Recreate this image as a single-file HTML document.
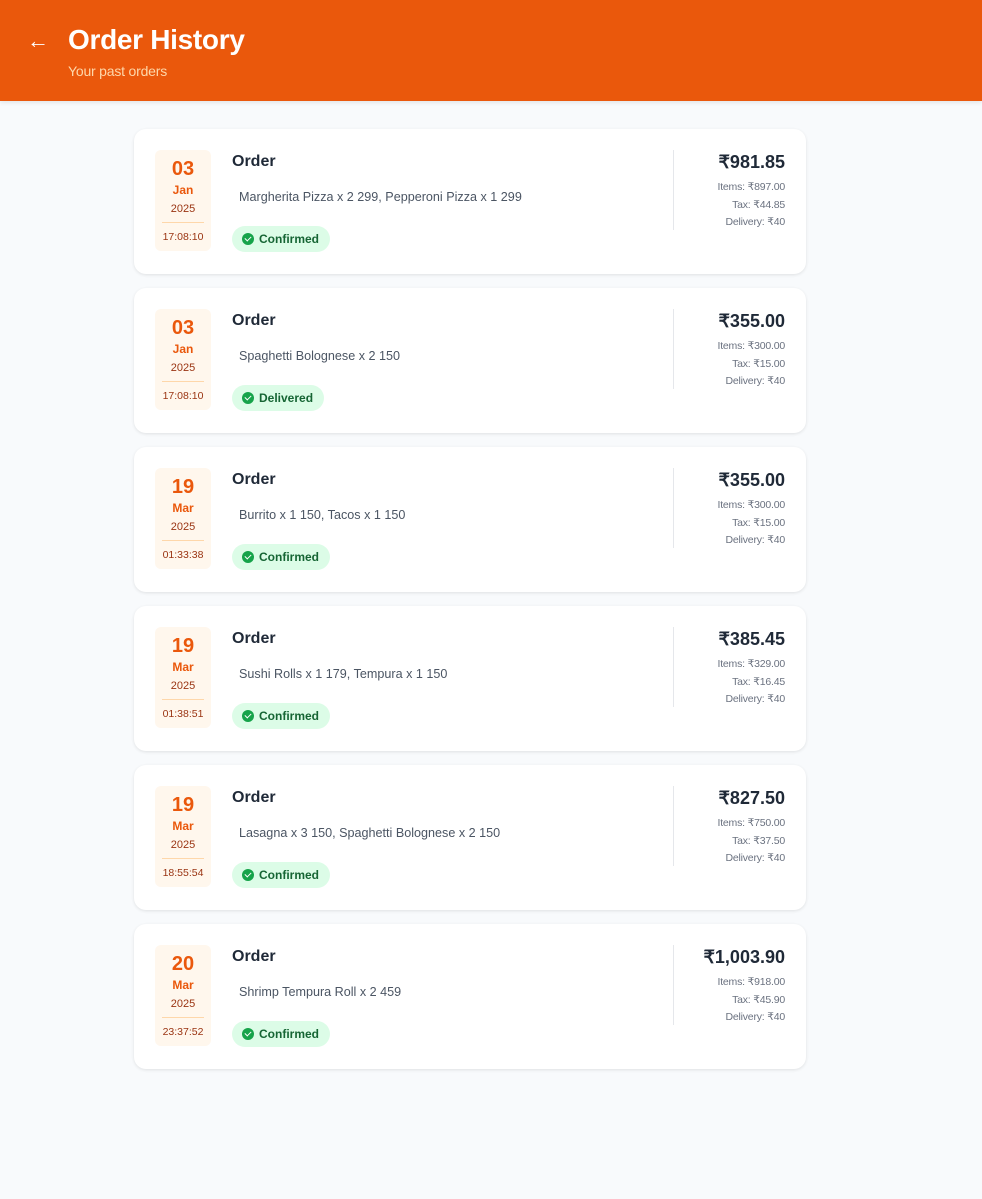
<!DOCTYPE html>
<html><head><meta charset="utf-8"><style>
*{box-sizing:border-box;margin:0;padding:0}
body{width:982px;height:1199px;background:#f8fafc;font-family:"Liberation Sans",sans-serif;overflow:hidden}
.hdr{height:101px;background:#ea580c;position:relative;box-shadow:0 2px 4px rgba(0,0,0,.08)}
.arrow{position:absolute;left:27px;top:28px;color:#fff;font-size:22px}
.hdr h1{position:absolute;left:68px;top:24px;color:#fff;font-size:28px;font-weight:bold;letter-spacing:-0.3px}
.hdr p{position:absolute;left:68px;top:63px;color:#fed7aa;font-size:14px;letter-spacing:-0.2px}
.card{position:absolute;left:134px;width:672px;height:145px;background:#fff;border-radius:12px;box-shadow:0 1px 3px rgba(0,0,0,.1)}
.date{position:absolute;left:21px;top:21px;width:56px;height:101px;background:#fff7ed;border-radius:6px;text-align:center}
.d{color:#ea580c;font-weight:bold;font-size:20px;margin-top:7px;line-height:24px}
.m{color:#ea580c;font-weight:bold;font-size:12px;line-height:16px;margin-top:1px}
.y{color:#9a3412;font-size:11px;line-height:14px;margin-top:4px}
.hr{width:42px;height:1px;background:#fed7aa;margin:6px auto 0}
.t{color:#9a3412;font-size:10.5px;line-height:14px;margin-top:7px}
.title{position:absolute;left:98px;top:24px;font-size:16px;font-weight:bold;color:#1f2937}
.items{position:absolute;left:105px;top:61px;font-size:12.6px;color:#4b5563}
.badge{position:absolute;left:98px;top:97px;height:26px;border-radius:13px;background:#dcfce7;color:#166534;font-size:12px;font-weight:bold;padding:0 11px 0 10px;display:flex;align-items:center;gap:5px}
.ck{width:12px;height:12px;border-radius:50%;background:#16a34a;display:inline-block;position:relative}
.ck:after{content:"";position:absolute;left:4px;top:2px;width:3px;height:5px;border:solid #fff;border-width:0 1.5px 1.5px 0;transform:rotate(45deg)}
.vl{position:absolute;left:539px;top:21px;width:1px;height:80px;background:#e5e7eb}
.pr{position:absolute;right:21px;top:22px;text-align:right}
.tot{font-size:18px;font-weight:bold;color:#1f2937;line-height:22px}
.sub{font-size:10.5px;color:#6b7280;line-height:17.5px;letter-spacing:-0.2px}
.sub:nth-child(2){margin-top:6px}
</style></head><body>
<div class="hdr"><span class="arrow">←</span><h1>Order History</h1><p>Your past orders</p></div>

<div class="card" style="top:129px"><div class="date"><div class="d">03</div><div class="m">Jan</div><div class="y">2025</div><div class="hr"></div><div class="t">17:08:10</div></div>
<div class="title">Order</div><div class="items">Margherita Pizza x 2 299, Pepperoni Pizza x 1 299</div>
<div class="badge"><span class="ck"></span>Confirmed</div><div class="vl"></div>
<div class="pr"><div class="tot">₹981.85</div><div class="sub">Items: ₹897.00</div><div class="sub">Tax: ₹44.85</div><div class="sub">Delivery: ₹40</div></div></div>

<div class="card" style="top:288px"><div class="date"><div class="d">03</div><div class="m">Jan</div><div class="y">2025</div><div class="hr"></div><div class="t">17:08:10</div></div>
<div class="title">Order</div><div class="items">Spaghetti Bolognese x 2 150</div>
<div class="badge"><span class="ck"></span>Delivered</div><div class="vl"></div>
<div class="pr"><div class="tot">₹355.00</div><div class="sub">Items: ₹300.00</div><div class="sub">Tax: ₹15.00</div><div class="sub">Delivery: ₹40</div></div></div>

<div class="card" style="top:447px"><div class="date"><div class="d">19</div><div class="m">Mar</div><div class="y">2025</div><div class="hr"></div><div class="t">01:33:38</div></div>
<div class="title">Order</div><div class="items">Burrito x 1 150, Tacos x 1 150</div>
<div class="badge"><span class="ck"></span>Confirmed</div><div class="vl"></div>
<div class="pr"><div class="tot">₹355.00</div><div class="sub">Items: ₹300.00</div><div class="sub">Tax: ₹15.00</div><div class="sub">Delivery: ₹40</div></div></div>

<div class="card" style="top:606px"><div class="date"><div class="d">19</div><div class="m">Mar</div><div class="y">2025</div><div class="hr"></div><div class="t">01:38:51</div></div>
<div class="title">Order</div><div class="items">Sushi Rolls x 1 179, Tempura x 1 150</div>
<div class="badge"><span class="ck"></span>Confirmed</div><div class="vl"></div>
<div class="pr"><div class="tot">₹385.45</div><div class="sub">Items: ₹329.00</div><div class="sub">Tax: ₹16.45</div><div class="sub">Delivery: ₹40</div></div></div>

<div class="card" style="top:765px"><div class="date"><div class="d">19</div><div class="m">Mar</div><div class="y">2025</div><div class="hr"></div><div class="t">18:55:54</div></div>
<div class="title">Order</div><div class="items">Lasagna x 3 150, Spaghetti Bolognese x 2 150</div>
<div class="badge"><span class="ck"></span>Confirmed</div><div class="vl"></div>
<div class="pr"><div class="tot">₹827.50</div><div class="sub">Items: ₹750.00</div><div class="sub">Tax: ₹37.50</div><div class="sub">Delivery: ₹40</div></div></div>

<div class="card" style="top:924px"><div class="date"><div class="d">20</div><div class="m">Mar</div><div class="y">2025</div><div class="hr"></div><div class="t">23:37:52</div></div>
<div class="title">Order</div><div class="items">Shrimp Tempura Roll x 2 459</div>
<div class="badge"><span class="ck"></span>Confirmed</div><div class="vl"></div>
<div class="pr"><div class="tot">₹1,003.90</div><div class="sub">Items: ₹918.00</div><div class="sub">Tax: ₹45.90</div><div class="sub">Delivery: ₹40</div></div></div>
</body></html>
